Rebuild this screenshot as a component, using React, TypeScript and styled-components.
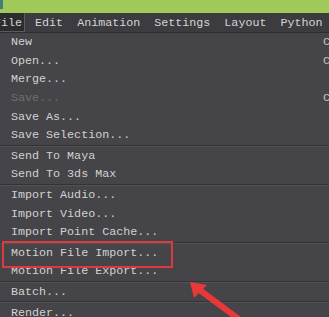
import React from "react";
import styled, { createGlobalStyle } from "styled-components";

const Global = createGlobalStyle`
  html, body { margin: 0; padding: 0; background: #454448; }
  #root { width: 329px; height: 317px; overflow: hidden; }
`;

const Frame = styled.div`
  position: relative;
  width: 329px;
  height: 317px;
  overflow: hidden;
  background: #454448;
  font-family: "Liberation Mono", "DejaVu Sans Mono", monospace;
  font-size: 11.7px;
  color: #d2d2d2;
`;

const TitleStrip = styled.div`
  height: 13px;
  background: #a0c95a;
  position: relative;
`;

const Corner = styled.div`
  position: absolute;
  left: 0;
  top: 0;
  width: 3px;
  height: 9px;
  background: #3f7f7a;
`;

const MenuBar = styled.div`
  display: flex;
  align-items: stretch;
  height: 19px;
  background: #3c3b3f;
  border-bottom: 1px solid #2e2d30;
  margin-left: -13px;
  white-space: nowrap;
`;

const BarItem = styled.div<{ $active?: boolean }>`
  display: flex;
  align-items: center;
  padding: ${(p) => (p.$active ? "0 3px 0 7px" : "0 7px")};
  margin-right: ${(p) => (p.$active ? "3px" : "0")};
  background: ${(p) => (p.$active ? "#2c2b2e" : "transparent")};
  box-shadow: ${(p) => (p.$active ? "inset -1px 0 0 #5a595d, inset 0 -1px 0 #5a595d" : "none")};
  color: #d4d4d4;
`;

const Menu = styled.div`
  display: flex;
  flex-direction: column;
  width: 380px;
`;

const Item = styled.div<{ $disabled?: boolean }>`
  display: grid;
  grid-template-columns: 312px auto;
  align-items: center;
  height: 18.6px;
  padding-left: 11px;
  white-space: nowrap;
  color: ${(p) => (p.$disabled ? "#6e6d71" : "#d2d2d2")};
`;

const Shortcut = styled.span`
  color: #c0c0c0;
`;

const Separator = styled.div`
  height: 1px;
  background: #333235;
  border-bottom: 1px solid #525155;
`;

const Overlay = styled.svg`
  position: absolute;
  left: 0;
  top: 0;
  pointer-events: none;
`;

type Entry = { label: string; shortcut?: string; disabled?: boolean } | "sep";

const entries: Entry[] = [
  { label: "New", shortcut: "Ctrl+N" },
  { label: "Open...", shortcut: "Ctrl+O" },
  { label: "Merge..." },
  { label: "Save...", shortcut: "Ctrl+S", disabled: true },
  { label: "Save As..." },
  { label: "Save Selection..." },
  "sep",
  { label: "Send To Maya" },
  { label: "Send To 3ds Max" },
  "sep",
  { label: "Import Audio..." },
  { label: "Import Video..." },
  { label: "Import Point Cache..." },
  "sep",
  { label: "Motion File Import..." },
  { label: "Motion File Export..." },
  "sep",
  { label: "Batch..." },
  "sep",
  { label: "Render..." },
];

const barItems = ["File", "Edit", "Animation", "Settings", "Layout", "Python"];

export default function App() {
  return (
    <>
      <Global />
      <Frame>
        <TitleStrip>
          <Corner />
        </TitleStrip>
        <MenuBar>
          {barItems.map((b, i) => (
            <BarItem key={b} $active={i === 0}>
              {b}
            </BarItem>
          ))}
        </MenuBar>
        <Menu>
          {entries.map((e, i) =>
            e === "sep" ? (
              <Separator key={i} />
            ) : (
              <Item key={i} $disabled={e.disabled}>
                <span>{e.label}</span>
                {e.shortcut ? <Shortcut>{e.shortcut}</Shortcut> : <span />}
              </Item>
            )
          )}
        </Menu>
        <Overlay width="329" height="317" viewBox="0 0 329 317">
          <rect x="3" y="242" width="169" height="25" fill="none" stroke="#dc3a3c" strokeWidth="2" />
          <line x1="197" y1="288" x2="240" y2="320" stroke="#e8383a" strokeWidth="6" />
          <polygon points="190,282 194,298 207,285" fill="#e8383a" />
        </Overlay>
      </Frame>
    </>
  );
}
